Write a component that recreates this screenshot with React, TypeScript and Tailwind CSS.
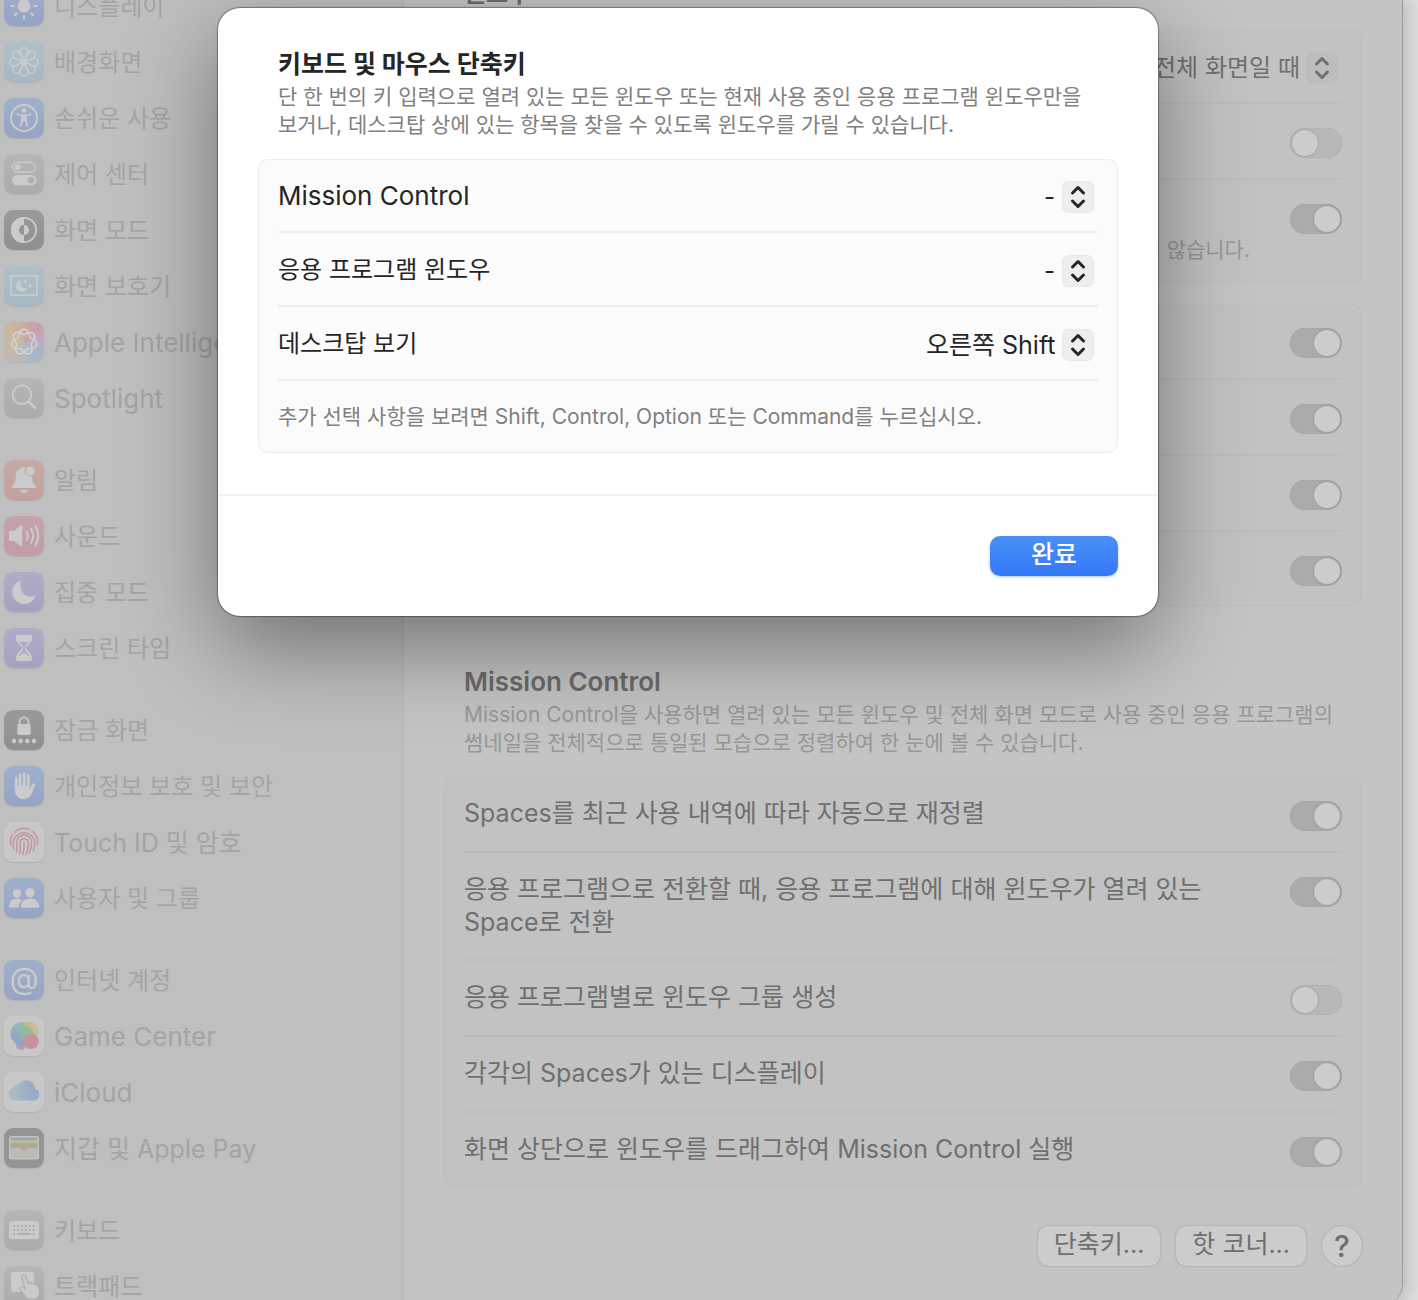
import type { ReactNode } from "react";

const petals = [0, 45, 90, 135, 180, 225, 270, 315];

// seven loops woven over two turns
const knot = Array.from({ length: 169 }, (_, i) => {
  const t = (i / 168) * Math.PI * 4;
  const r = 10.2 + 2.6 * Math.cos(3.5 * t);
  return `${(20 + r * Math.sin(t)).toFixed(2)},${(20 - r * Math.cos(t)).toFixed(2)}`;
}).join(" ");

const labelSize = (text: string) => {
  if (/^[A-Za-z ]+$/.test(text)) return "text-[26px]";
  return /[A-Za-z]/.test(text) ? "text-[25px]" : "text-[24px]";
};

const Icon = ({ children }: { children: ReactNode }) => (
  <svg viewBox="0 0 40 40" className="size-10" fill="#cbcbcb" stroke="none">
    {children}
  </svg>
);

const DisplayIcon = () => (
  <Icon>
    <circle cx="20" cy="20" r="6.5" />
    {petals.map((a) => (
      <path
        key={a}
        d="M20 9.800V7.200"
        stroke="#cbcbcb"
        strokeWidth="2"
        strokeLinecap="round"
        transform={`rotate(${a} 20 20)`}
      />
    ))}
  </Icon>
);

const WallpaperIcon = () => (
  <Icon>
    <g fill="none" stroke="#cbcbcb" strokeWidth="1.400">
      {petals.map((a) => (
        <path
          key={a}
          d="M20 18.500 16.400 12.300a4.200 4.200 0 1 1 7.200 0Z"
          transform={`rotate(${a} 20 20)`}
        />
      ))}
    </g>
    <circle cx="20" cy="20" r="1.800" />
  </Icon>
);

const AccessibilityIcon = () => (
  <Icon>
    <circle cx="20" cy="20" r="13" fill="none" stroke="#cbcbcb" strokeWidth="2" />
    <circle cx="20" cy="12.600" r="2.300" />
    <path d="M13.400 15.600c2 .6 4.200.9 6.600.9s4.600-.3 6.600-.9c1-.2 1.200 1 .3 1.400-1.400.500-2.900.9-4.300 1.100.1 3.600.5 6.400 1.600 9.700.4 1.100-1.200 1.600-1.600.5L20.400 23h-.8l-2.200 5.300c-.4 1.100-2 .6-1.600-.5 1.100-3.300 1.500-6.100 1.600-9.700-1.400-.2-2.900-.6-4.300-1.100-.9-.4-.7-1.600.3-1.400Z" />
  </Icon>
);

const ControlCenterIcon = () => (
  <Icon>
    <rect x="8.500" y="8.500" width="23" height="9.600" rx="4.800" fill="none" stroke="#cbcbcb" strokeWidth="1.500" />
    <circle cx="13.700" cy="13.300" r="3" />
    <rect x="8" y="21" width="24.500" height="10.500" rx="5.250" />
    <circle cx="27" cy="26.250" r="3.300" fill="#b0b0b0" />
  </Icon>
);

const AppearanceIcon = () => (
  <Icon>
    <circle cx="20" cy="20" r="12.200" fill="none" stroke="#cbcbcb" strokeWidth="1.800" />
    <path d="M20 7v8a5 5 0 0 0 0 10v8a13 13 0 0 1 0-26Z" />
    <path d="M20 15a5 5 0 0 1 0 10Z" />
  </Icon>
);

const ScreenSaverIcon = () => (
  <Icon>
    <rect x="7" y="9.700" width="26" height="19.600" fill="none" stroke="#cbcbcb" strokeWidth="1.600" />
    <path d="M17 14.500a5.600 5.600 0 1 0 5.800 7.700 5.400 5.400 0 0 1-5.800-7.700Z" />
    <path d="m21.300 13 .7 1.900 1.900.7-1.900.7-.7 1.900-.7-1.900-1.900-.7 1.900-.7ZM26 16.600l.8 2.200 2.200.8-2.200.8-.8 2.200-.8-2.200-2.200-.8 2.200-.8Z" />
  </Icon>
);

const IntelligenceIcon = () => (
  <Icon>
    <polyline points={knot} fill="none" stroke="#d2d0d0" strokeWidth="1.700" />
  </Icon>
);

const SpotlightIcon = () => (
  <Icon>
    <circle cx="18" cy="16.700" r="9.300" fill="none" stroke="#cbcbcb" strokeWidth="1.800" />
    <path d="m25 24 6 5.800" stroke="#cbcbcb" strokeWidth="2.600" strokeLinecap="round" />
  </Icon>
);

const BellIcon = () => (
  <Icon>
    <path d="M19.500 7c.9 0 1.500.3 1.900.8a6 6 0 0 0 6.600 8.600c.2 4.800.9 6.400 3.600 9 1 1.100.5 2.600-1 2.600H9.200c-1.500 0-2-1.500-1-2.600 2.700-2.600 3.400-4.200 3.600-9 .2-4.400 2-7 5.200-7.800.4-1 1.300-1.600 2.500-1.600ZM16.300 30h7.400a3.800 3.800 0 0 1-7.400 0Z" />
    <circle cx="26.300" cy="11" r="4.500" />
  </Icon>
);

const SoundIcon = () => (
  <Icon>
    <path d="M6.500 14.800h3.700l6.200-5.100c.8-.7 1.800-.2 1.800.8v18.800c0 1-1 1.500-1.800.8l-6.200-5.100H6.500c-.9 0-1.500-.6-1.500-1.500v-7.200c0-.9.600-1.500 1.500-1.500Z" />
    <g fill="none" stroke="#cbcbcb" strokeWidth="1.900" strokeLinecap="round">
      <path d="M22.500 15.500c1.600 2.700 1.600 6 0 8.700M27 12.800c2.600 4.300 2.600 9.800 0 14.100M31.300 10.300c3.600 5.900 3.600 13.200 0 19.100" />
    </g>
  </Icon>
);

const MoonIcon = () => (
  <Icon>
    <path d="M16.200 8.700a12 12 0 1 0 15.200 15.600c.2-.6-.3-.9-.8-.6-8.500 3.400-16.500-4.500-13.700-14.100.2-.7-.2-1.100-.7-.9Z" />
  </Icon>
);

const HourglassIcon = () => (
  <Icon>
    <path
      fillRule="evenodd"
      d="M13.700 7h12.600c1.100 0 1.700.7 1.700 1.700 0 4.700-1.900 7-5.200 9.600-1.300 1-1.300 2.400 0 3.400 3.300 2.600 5.200 4.900 5.200 9.600 0 1-.6 1.700-1.700 1.700H13.700c-1.100 0-1.700-.7-1.700-1.700 0-4.700 1.900-7 5.200-9.600 1.300-1 1.300-2.400 0-3.400C13.900 15.700 12 13.400 12 8.700c0-1 .6-1.700 1.700-1.700Zm1.500 7c1 1.600 2.600 2.700 3.500 3.700.7.800.7 4 0 5-1.500 1.800-3.600 3.400-4.400 5.800l5.700-3.500 5.700 3.500c-.8-2.400-2.900-4-4.400-5.800-.7-1-.7-4.200 0-5 .9-1 2.500-2.100 3.500-3.700Z"
    />
  </Icon>
);

const LockIcon = () => (
  <Icon>
    <path d="M15.500 15v-3a4.500 4.500 0 0 1 9 0v3" fill="none" stroke="#cbcbcb" strokeWidth="1.900" />
    <rect x="13.300" y="14" width="13.400" height="11" rx="1.800" />
    {[10, 16.7, 23.3, 30].map((x) => (
      <circle key={x} cx={x} cy="31" r="2.200" />
    ))}
  </Icon>
);

const HandIcon = () => (
  <Icon>
    <g stroke="#cbcbcb" strokeWidth="2.700" strokeLinecap="round">
      <path d="M12.200 12v12M16 8.600V22M20.200 7.500V22M24.300 9.300V22" />
    </g>
    <path d="M10.900 19.500 25.600 19v4.400l2.600-5.300c.9-1.700 3.300-1 2.700 1-1 3.300-2 6.400-3.700 9.500-1.600 3-3.900 4.400-7.300 4.400-5.700 0-9-3.400-9-9.300Z" />
  </Icon>
);

const FingerprintIcon = () => (
  <Icon>
    <g fill="none" stroke="#c2979c" strokeWidth="1.500" strokeLinecap="round">
      <path d="M10.300 10.500a13.600 13.600 0 0 1 14.500-3.200M28 9.200a13.500 13.500 0 0 1 5.300 13.300M8.300 13a13.500 13.500 0 0 0-1.300 10.500" />
      <path d="M9.800 27.500c-.9-3-.8-5.500-.3-8a10.700 10.700 0 0 1 21.200 1c.1 3-.3 6-1.500 8.500" />
      <path d="M12.600 30c.8-3-.1-6.500.1-9.700a7.400 7.400 0 0 1 14.800 0c.1 4-.4 7.500-2.200 11" />
      <path d="M15.600 32c1.600-3.600.1-8 .4-11.800a4.100 4.100 0 0 1 8.100 0c.3 4.600-.2 8.600-2.200 12.600" />
      <path d="M20 20.500c.2 4.500.2 8-1.200 12" />
    </g>
  </Icon>
);

const UsersIcon = () => (
  <Icon>
    <circle cx="13" cy="15.500" r="4.200" />
    <path d="M5 28c.5-4.700 3.700-7.200 8-7.200 2 0 3.700.5 5 1.500-2 1.700-3.200 4-3.500 7.200H6.300c-.9 0-1.400-.6-1.300-1.500Z" />
    <circle cx="26" cy="14.700" r="4.800" />
    <path d="M16.800 27.900c.7-4.600 4.200-7.400 9.200-7.400s8.500 2.800 9.200 7.400c.1 1-.5 1.800-1.500 1.800H18.300c-1 0-1.600-.8-1.500-1.800Z" />
  </Icon>
);

const GameCenterIcon = () => (
  <Icon>
    <defs>
      <linearGradient id="gc" x1="0" y1="0" x2="0" y2="1">
        <stop offset="0" stopColor="#92bdb9" />
        <stop offset="1" stopColor="#8ba3c4" />
      </linearGradient>
    </defs>
    <circle cx="17" cy="28.500" r="5.200" fill="#b199c4" />
    <circle cx="18" cy="17.500" r="11.500" fill="url(#gc)" />
    <circle cx="25.700" cy="14.500" r="9" fill="#c9bd83" fillOpacity=".8" />
    <path d="M18.500 9.200a9 9 0 0 0 4.500 14c3.500-1 6-3.800 6-7-.8-4-5-7-10.500-7Z" fill="#98b89a" />
    <circle cx="27" cy="25.300" r="7.800" fill="#c5929d" />
  </Icon>
);

const CloudIcon = () => (
  <Icon>
    <defs>
      <linearGradient id="cloud" x1="0" y1="0" x2="1" y2="0">
        <stop offset="0" stopColor="#abbfc6" />
        <stop offset="1" stopColor="#94a6c4" />
      </linearGradient>
    </defs>
    <path
      d="M10.500 28.500a6.500 6.500 0 0 1-1.300-12.700 5 5 0 0 1 5.500-3.300 8.800 8.800 0 0 1 16.300 4.300 6 6 0 0 1-1.300 11.700Z"
      fill="url(#cloud)"
    />
  </Icon>
);

const WalletIcon = () => (
  <Icon>
    <rect x="5" y="8" width="30" height="23.500" rx="2.500" fill="#c4c4c0" />
    <path d="M6.500 9.500h27V12h-27Z" fill="#99a6b5" />
    <path d="M6.500 12h27v2.500h-27Z" fill="#c4b48f" />
    <path d="M6.500 14.500h27V17h-27Z" fill="#9fb59b" />
    <path d="M6.500 17h27v3h-9c-1.500 0-2.500 3-4.500 3s-3-3-4.500-3h-9Z" fill="#c29c96" />
    <path d="M6.500 20h9c1.500 0 2.500 3 4.500 3s3-3 4.500-3h9v9c0 .6-.4 1-1 1h-25c-.6 0-1-.4-1-1Z" fill="#babbb4" />
  </Icon>
);

const KeyboardIcon = () => (
  <Icon>
    <rect x="5" y="11" width="30" height="18" rx="2.500" />
    <g fill="none" stroke="#b0b0b0" strokeWidth="2.200">
      <path d="M9 16h22.500M9 20h22.500" strokeDasharray="2.200 1.700" />
      <path d="M9 24h2.200M13 24h14M28.600 24h2.200" />
    </g>
  </Icon>
);

const TrackpadIcon = () => (
  <Icon>
    <rect x="7" y="6" width="23" height="20" rx="2.500" />
    <path
      d="M17.800 11.500c-1-2.600 2.600-3.900 3.600-1.400l2.900 7.100c1.500-1 3-.6 3.600.5 1.400-.6 2.700-.1 3.300 1 1.500-.3 2.500.5 3 1.900 1.300 4 2 6.600.6 9.200-2.500 4.300-9.700 4.700-13.300.6l-5.400-6.800c-1.500-2 .8-4 2.700-2.500l2.400 1.700Z"
      stroke="#b0b0b0"
      strokeWidth="1.300"
    />
  </Icon>
);

const blue = "bg-linear-to-b from-[#9fb0cb] to-[#95a4c5]";
const sky = "bg-linear-to-b from-[#aebfc5] to-[#a5b9c6]";
const gray = "bg-linear-to-b from-[#b5b5b5] to-[#acacac]";
const dark = "bg-linear-to-b from-[#9a9a9a] to-[#8f8f8f]";
const violet = "bg-linear-to-b from-[#afadc6] to-[#a4a2c0]";
const white = "bg-[#c8c8c8]";

const menu = [
  [
    { name: "디스플레이", tile: blue, icon: <DisplayIcon /> },
    { name: "배경화면", tile: sky, icon: <WallpaperIcon /> },
    { name: "손쉬운 사용", tile: blue, icon: <AccessibilityIcon /> },
    { name: "제어 센터", tile: gray, icon: <ControlCenterIcon /> },
    { name: "화면 모드", tile: dark, icon: <AppearanceIcon /> },
    { name: "화면 보호기", tile: sky, icon: <ScreenSaverIcon /> },
    {
      name: "Apple Intelligence",
      tile: "bg-[conic-gradient(from_-45deg,#c9b89c,#c99fae_25%,#bcaac6_37%,#a5b8c8_50%,#b4bcbf_65%,#c4b8a8_80%,#c9b89c)]",
      icon: <IntelligenceIcon />,
    },
    { name: "Spotlight", tile: gray, icon: <SpotlightIcon /> },
  ],
  [
    { name: "알림", tile: "bg-linear-to-b from-[#c5aaa6] to-[#c49f9e]", icon: <BellIcon /> },
    { name: "사운드", tile: "bg-linear-to-b from-[#c5a4ab] to-[#c29ba5]", icon: <SoundIcon /> },
    { name: "집중 모드", tile: violet, icon: <MoonIcon /> },
    { name: "스크린 타임", tile: violet, icon: <HourglassIcon /> },
  ],
  [
    { name: "잠금 화면", tile: dark, icon: <LockIcon /> },
    { name: "개인정보 보호 및 보안", tile: blue, icon: <HandIcon /> },
    { name: "Touch ID 및 암호", tile: white, icon: <FingerprintIcon /> },
    { name: "사용자 및 그룹", tile: blue, icon: <UsersIcon /> },
  ],
  [
    {
      name: "인터넷 계정",
      tile: blue,
      icon: <span className="pb-1 text-[30px] leading-8 text-[#cbcbcb]">@</span>,
    },
    { name: "Game Center", tile: white, icon: <GameCenterIcon /> },
    { name: "iCloud", tile: white, icon: <CloudIcon /> },
    { name: "지갑 및 Apple Pay", tile: "bg-[#949494]", icon: <WalletIcon /> },
  ],
  [
    { name: "키보드", tile: gray, icon: <KeyboardIcon /> },
    { name: "트랙패드", tile: gray, icon: <TrackpadIcon /> },
  ],
];

const Sidebar = () => {
  return (
    <nav className="w-[404px] shrink-0 border-r-2 border-[#b9b9b9] bg-[#bfbfbf]">
      <div className="-mt-[22px] flex flex-col gap-[26px]">
        {menu.map((group, i) => (
          <ul key={i}>
            {group.map((item) => (
              <li key={item.name}>
                <a href="#" className="flex h-14 items-center gap-[10px] pl-1">
                  <span
                    className={`flex size-10 shrink-0 items-center justify-center overflow-hidden rounded-[9px] shadow-[0_1px_1px_rgba(0,0,0,0.08)] ${item.tile}`}
                  >
                    {item.icon}
                  </span>
                  <span className={`pt-[2px] whitespace-nowrap text-[#a4a4a4] ${labelSize(item.name)}`}>
                    {item.name}
                  </span>
                </a>
              </li>
            ))}
          </ul>
        ))}
      </div>
    </nav>
  );
};

const Card = ({ children }: { children: ReactNode }) => (
  <div className="rounded-[10px] bg-[#c2c2c2] px-5 shadow-[inset_0_0_0_1px_#bebebe]">
    {children}
  </div>
);

const Toggle = ({ id, on }: { id: string; on?: boolean }) => (
  <input
    id={id}
    type="checkbox"
    role="switch"
    aria-label={id}
    defaultChecked={on}
    className="mt-1 h-[30px] w-[52px] shrink-0 appearance-none rounded-full bg-[#b8b8b8] p-[2px] shadow-[inset_0_0_1px_rgba(0,0,0,0.2)] before:block before:size-[26px] before:rounded-full before:bg-[#cccccc] before:shadow-[0_0_2px_rgba(0,0,0,0.25)] checked:bg-[#ababab] checked:before:ml-[22px]"
  />
);

const ToggleRow = ({ id, label, on }: { id: string; label?: string; on?: boolean }) => (
  <div className="flex items-start justify-between gap-20 border-b-2 border-[#bdbdbd] py-5 last:border-b-0">
    <label htmlFor={id} className="text-[25px] leading-[33px] text-[#6f6f6f]">
      {label}
    </label>
    <Toggle id={id} on={on} />
  </div>
);

const Popup = ({ label, value, dim }: { label: string; value: string; dim?: boolean }) => (
  <div className="mr-1 grid items-center">
    <select
      aria-label={label}
      defaultValue={value}
      className={`col-start-1 row-start-1 h-8 appearance-none bg-transparent pr-[38px] leading-8 ${labelSize(value)} ${dim ? "text-[#6f6f6f]" : "text-[#252525]"}`}
    >
      <option>{value}</option>
    </select>
    <span
      className={`pointer-events-none col-start-1 row-start-1 flex size-8 items-center justify-center justify-self-end rounded-[7px] ${dim ? "bg-[#bdbdbd] text-[#6f6f6f]" : "bg-[#eeeeee] text-[#252525] shadow-[inset_0_0_0_1px_#e9e9e9]"}`}
    >
      <svg
        viewBox="0 0 32 32"
        className="size-8"
        fill="none"
        stroke="currentColor"
        strokeWidth="3"
        strokeLinecap="round"
        strokeLinejoin="round"
      >
        <path d="m10.500 12 5.500-5.500 5.500 5.500M10.500 20l5.500 5.500 5.500-5.500" />
      </svg>
    </span>
  </div>
);

const Settings = () => {
  return (
    <main className="min-w-0 flex-1 bg-[#c4c4c4] px-10">
      <h2 className="-mt-[22px] mb-5 px-5 leading-8 font-bold text-[#6b6b6b]">윈도우</h2>
      <div className="flex flex-col gap-5">
        <Card>
          <div className="flex justify-end border-b-2 border-[#bdbdbd] pt-[22px] pb-[18px]">
            <Popup label="탭" value="전체 화면일 때" dim />
          </div>
          <ToggleRow id="close" />
          <div className="flex items-start justify-end gap-10 py-5">
            <p className="pt-9 text-[21px] leading-7 text-[#979797]">지 않습니다.</p>
            <Toggle id="restore" on />
          </div>
        </Card>
        <Card>
          <ToggleRow id="drag-left" on />
          <ToggleRow id="drag-top" on />
          <ToggleRow id="drag-option" on />
          <ToggleRow id="margins" on />
        </Card>
      </div>

      <div className="mt-[60px] mb-5 px-5">
        <h2 className="pb-[3px] text-[26px] leading-8 font-semibold text-[#6b6b6b]">
          Mission Control
        </h2>
        <p className="text-[21px] leading-7 text-[#979797]">
          Mission Control을 사용하면 열려 있는 모든 윈도우 및 전체 화면 모드로 사용 중인 응용 프로그램의
          썸네일을 전체적으로 통일된 모습으로 정렬하여 한 눈에 볼 수 있습니다.
        </p>
      </div>
      <Card>
        <ToggleRow id="rearrange" label="Spaces를 최근 사용 내역에 따라 자동으로 재정렬" on />
        <ToggleRow
          id="switch-space"
          label="응용 프로그램으로 전환할 때, 응용 프로그램에 대해 윈도우가 열려 있는 Space로 전환"
          on
        />
        <ToggleRow id="group" label="응용 프로그램별로 윈도우 그룹 생성" />
        <ToggleRow id="displays" label="각각의 Spaces가 있는 디스플레이" on />
        <ToggleRow
          id="drag-mission"
          label="화면 상단으로 윈도우를 드래그하여 Mission Control 실행"
          on
        />
      </Card>

      <div className="mt-[39px] flex justify-end gap-4 text-[25px] text-[#6f6f6f]">
        <button className="h-10 rounded-[10px] bg-[#cccccc] px-4 pb-1 shadow-[0_0_2px_rgba(0,0,0,0.25)]">
          단축키...
        </button>
        <button className="h-10 rounded-[10px] bg-[#cccccc] px-4 pb-1 shadow-[0_0_2px_rgba(0,0,0,0.25)]">
          핫 코너...
        </button>
        <button className="size-10 rounded-full bg-[#cccccc] text-[30px] leading-10 font-medium shadow-[0_0_2px_rgba(0,0,0,0.25)]">
          ?
        </button>
      </div>
    </main>
  );
};

const shortcuts = [
  { name: "Mission Control", value: "-" },
  { name: "응용 프로그램 윈도우", value: "-" },
  { name: "데스크탑 보기", value: "오른쪽 Shift" },
];

const ShortcutSheet = () => {
  return (
    <div className="absolute inset-x-0 top-2 pr-[260px] pl-[218px]">
      <div
        role="dialog"
        aria-labelledby="sheet-title"
        className="rounded-[22px] bg-white shadow-[0_0_1px_1px_rgba(0,0,0,0.35),0_30px_90px_rgba(0,0,0,0.42)]"
      >
        <div className="px-10 pt-10 pb-[41px]">
          <div className="mb-5 px-5">
            <h1 id="sheet-title" className="text-[25px] leading-8 font-bold text-[#252525]">
              키보드 및 마우스 단축키
            </h1>
            <p className="pt-[3px] text-[21px] leading-7 text-[#808080]">
              단 한 번의 키 입력으로 열려 있는 모든 윈도우 또는 현재 사용 중인 응용 프로그램 윈도우만을
              보거나, 데스크탑 상에 있는 항목을 찾을 수 있도록 윈도우를 가릴 수 있습니다.
            </p>
          </div>
          <div className="rounded-[10px] bg-[#fbfbfb] px-5 shadow-[inset_0_0_0_1px_#ececec]">
            {shortcuts.map((item) => (
              <div
                key={item.name}
                className="flex items-start justify-between border-b-2 border-[#eeeeee] pt-[22px] pb-[18px]"
              >
                <span className={`leading-[30px] text-[#252525] ${labelSize(item.name)}`}>
                  {item.name}
                </span>
                <Popup label={item.name} value={item.value} />
              </div>
            ))}
            <p className="py-[22px] text-[21px] leading-7 text-[#808080]">
              추가 선택 사항을 보려면 Shift, Control, Option 또는 Command를 누르십시오.
            </p>
          </div>
        </div>
        <div className="flex justify-end border-t-2 border-[#f0f0f0] p-10">
          <button className="h-10 w-32 rounded-[10px] bg-linear-to-b from-[#4a90f9] to-[#3478f6] pb-1 text-[25px] font-medium text-white shadow-[0_1px_3px_rgba(52,120,246,0.4)]">
            완료
          </button>
        </div>
      </div>
    </div>
  );
};

export default function App() {
  return (
    <div className="relative h-screen overflow-hidden bg-[#dedede] font-['Inter','Noto_Sans_CJK_KR',sans-serif] text-[24px] leading-8 break-keep">
      <div className="mr-[15px] flex h-[calc(100%+6px)] overflow-hidden rounded-br-[22px] border-r border-[#9c9c9c] bg-[#c4c4c4] shadow-[0_0_20px_rgba(0,0,0,0.25)]">
        <Sidebar />
        <Settings />
      </div>
      <ShortcutSheet />
    </div>
  );
}
